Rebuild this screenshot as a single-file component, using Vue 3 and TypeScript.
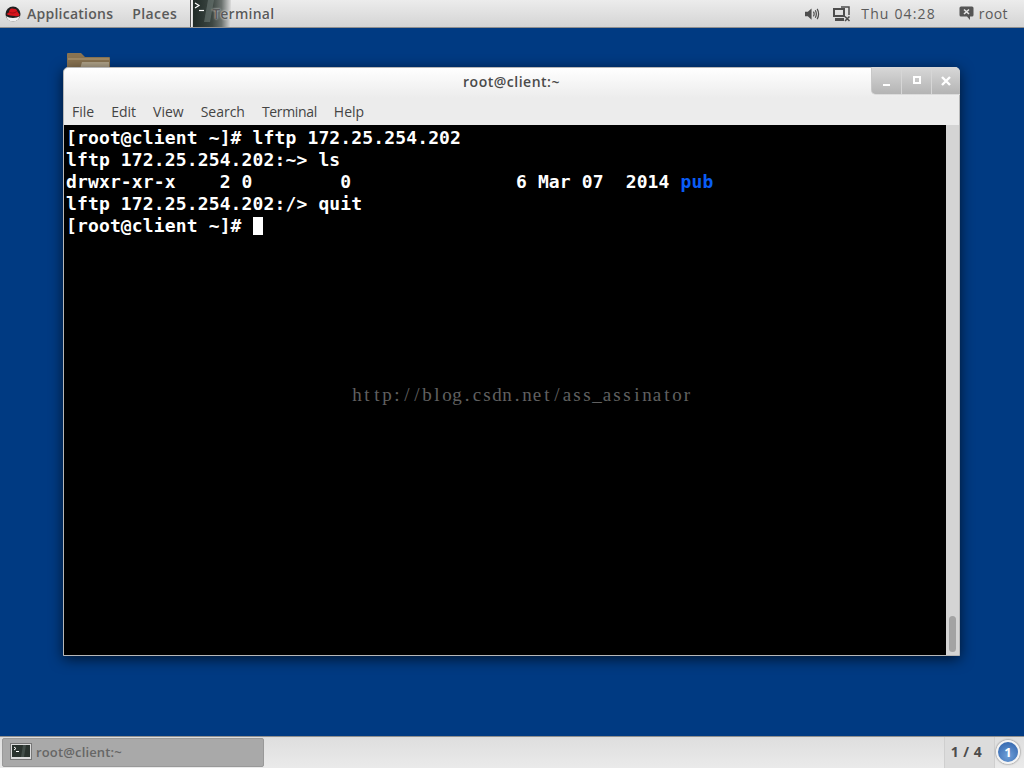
<script setup lang="ts">
const menus: string[] = ['File', 'Edit', 'View', 'Search', 'Terminal', 'Help']
const lines: { text: string; dir?: string }[] = [
  { text: '[root@client ~]# lftp 172.25.254.202' },
  { text: 'lftp 172.25.254.202:~> ls' },
  { text: 'drwxr-xr-x    2 0        0               6 Mar 07  2014 ', dir: 'pub' },
  { text: 'lftp 172.25.254.202:/> quit' },
]
const watermark: string[] = Array.from('http://blog.csdn.net/ass_assinator')
</script>

<template>
  <div class="screen">
    <header class="top">
      <div class="top-left">
        <svg class="hat" viewBox="0 0 16 16" width="16" height="16">
          <circle cx="8" cy="8" r="7.5" fill="#1f1f1f" />
          <path d="M1.2 10 C4 12.5 12 12.5 14.8 10 C14 14 11 15.5 8 15.5 C5 15.5 2 14 1.2 10Z" fill="#f2f2f2" />
          <path d="M1.5 8 C2.5 7 3.5 7.5 4 6 C4.5 3.5 5.5 2 7.5 2.6 C9.5 3.2 11 2.6 11.8 4.2 C12.5 6 14 7.2 14.6 8.8 C14.3 10.3 12 10.6 9.5 10 C6.5 9.5 3.5 9.8 1.5 8Z" fill="#d8141c" />
          <path d="M4.2 6 C6 7.5 9.5 7.5 11.8 5.4" fill="none" stroke="#8f0d12" stroke-width=".8" />
        </svg>
        <span class="apps">Applications</span>
        <span class="places">Places</span>
        <span class="sep"></span>
        <span class="task-tab">
          <span class="tab-icon"><svg viewBox="0 0 38 27" width="38" height="27"><path d="M15 0 L11 22 L17 22 L21 0Z" fill="#7c8a84" opacity=".45" /><path d="M2 3 L6 5.5 L2 8" fill="none" stroke="#fff" stroke-width="1.2" /><path d="M6 10.5 H11" stroke="#fff" stroke-width="1.2" /></svg></span>
          <span class="tab-label">Terminal</span>
        </span>
      </div>
      <div class="top-right">
        <svg class="vol" viewBox="0 0 16 14" width="16" height="14">
          <path d="M0 4.5 H3 L7 1 V13 L3 9.5 H0Z" fill="#4d4d4d" />
          <path d="M9 4.5 Q10.5 7 9 9.5 M11 3 Q13.2 7 11 11 M13 1.5 Q16 7 13 12.5" fill="none" stroke="#4d4d4d" stroke-width="1.3" />
        </svg>
        <svg class="net" viewBox="0 0 18 16" width="18" height="16">
          <rect x="1" y="3" width="10" height="7" fill="none" stroke="#4d4d4d" stroke-width="2" />
          <rect x="2" y="12" width="9" height="3" fill="#4d4d4d" />
          <path d="M8 1 H16 V9" fill="none" stroke="#4d4d4d" stroke-width="1.5" />
          <path d="M12 10.5 L16.5 15 M16.5 10.5 L12 15" stroke="#4d4d4d" stroke-width="1.6" />
        </svg>
        <span class="clock">Thu 04:28</span>
        <svg class="chat" viewBox="0 0 15 15" width="15" height="15">
          <path d="M2 0.5 H13 Q14.5 0.5 14.5 2 V9 Q14.5 10.5 13 10.5 H11 V14 L8 10.5 H2 Q0.5 10.5 0.5 9 V2 Q0.5 0.5 2 0.5Z" fill="#555" />
          <path d="M5 3.5 L10 8 M10 3.5 L5 8" stroke="#e4e4e4" stroke-width="1.6" />
        </svg>
        <span class="user">root</span>
      </div>
    </header>

    <main class="desktop">
      <svg class="folder" viewBox="0 0 44 16" width="44" height="16">
        <path d="M0 16 V1 Q0 0 1 0 H14 L18 4 H42 Q43 4 43 5 V16Z" fill="#8a7452" />
        <rect x="1" y="5" width="41" height="2" fill="#a08a66" />
        <path d="M13 16 L15 9 H42 V16Z" fill="#b3a68c" />
      </svg>

      <section class="window">
        <div class="titlebar">
          <span class="title">root@client:~</span>
          <div class="controls">
            <span class="ctl"><svg viewBox="0 0 12 12" width="12" height="12"><rect x="2" y="9" width="7" height="2" fill="#fff" /></svg></span>
            <span class="ctl"><svg viewBox="0 0 12 12" width="12" height="12"><path fill-rule="evenodd" d="M2 1 H10 V9 H2Z M4 3 V7 H8 V3Z" fill="#fff" /></svg></span>
            <span class="ctl last"><svg viewBox="0 0 12 12" width="12" height="12"><path d="M2 2 L10 10 M10 2 L2 10" stroke="#fff" stroke-width="2.4" /></svg></span>
          </div>
        </div>
        <nav class="menubar">
          <span v-for="m in menus" :key="m">{{ m }}</span>
        </nav>
        <div class="content">
          <div class="terminal">
            <div v-for="(l, i) in lines" :key="i" class="line">{{ l.text }}<span v-if="l.dir" class="dir">{{ l.dir }}</span></div>
            <div class="line">[root@client ~]# <span class="cursor"></span></div>
            <div class="mark"><span v-for="(c, i) in watermark" :key="i" class="ch">{{ c }}</span></div>
          </div>
          <div class="scroll"><span class="thumb"></span></div>
        </div>
      </section>
    </main>

    <footer class="bottom">
      <div class="task">
        <span class="task-icon">
          <svg viewBox="0 0 22 17" width="22" height="17"><rect x="0.5" y="0.5" width="21" height="16" fill="#dcdcdc" stroke="#777" /><rect x="2" y="2" width="18" height="12" fill="#2a332e" /><path d="M11 14 L13 2 H16 L14 14Z" fill="#5c6a64" opacity=".5" /><path d="M4 4 L6 5.5 L4 7" fill="none" stroke="#fff" /><path d="M6 8.5 H9" stroke="#fff" /></svg>
        </span>
        <span>root@client:~</span>
      </div>
      <div class="bottom-right">
        <span class="pager">1 / 4</span>
        <span class="badge">1</span>
      </div>
    </footer>
  </div>
</template>

<style>
html, body { margin: 0; background: #003a82; }
</style>

<style scoped>
.screen {
  width: 1024px;
  height: 768px;
  display: flex;
  flex-direction: column;
  overflow: hidden;
  background: #003a82;
  font-family: "Open Sans", sans-serif;
}
.top {
  height: 27px;
  flex: none;
  display: flex;
  justify-content: space-between;
  background: linear-gradient(#ececec, #d4d4d4);
  border-bottom: 1px solid #8f8f8f;
  color: #5a5a5a;
  font-size: 14px;
  font-weight: 600;
}
.top-left, .top-right { display: flex; align-items: center; }
.hat { margin-left: 5px; }
.apps { margin-left: 6px; letter-spacing: .25px; }
.places { margin-left: 19px; letter-spacing: .4px; }
.sep { width: 2px; height: 27px; margin-left: 13px; background: #555; border-right: 1px solid #eee; box-sizing: border-box; }
.task-tab { display: flex; align-items: center; margin-left: 1px; position: relative; height: 27px; }
.tab-icon { display: block; width: 38px; height: 27px; overflow: hidden; background: linear-gradient(90deg, #1f2a26 0%, #3c4642 50%, #6a716e 75%, #dcdcdc 100%); }
.tab-label { margin-left: -19px; position: relative; letter-spacing: .25px; text-shadow: 0 0 2px #fff; }
.top-right { padding-right: 16px; }
.vol { margin-right: 13px; width: 15px; }
.net { margin-right: 10px; }
.clock { letter-spacing: 1.15px; font-weight: 500; margin-right: 23px; }
.chat { margin-right: 5px; }
.user { letter-spacing: .4px; font-weight: 500; }
.desktop { flex: 1; position: relative; }
.folder { position: absolute; left: 67px; top: 25px; }
.window {
  position: absolute;
  left: 63px;
  top: 39px;
  width: 895px;
  height: 587px;
  display: flex;
  flex-direction: column;
  background: #ececec;
  border-radius: 5px 5px 0 0;
  border: 1px solid #b8b8b8;
  box-shadow: 0 3px 14px rgba(0, 0, 0, .65);
}
.titlebar {
  height: 30px;
  flex: none;
  position: relative;
  display: flex;
  align-items: center;
  justify-content: center;
  background: linear-gradient(#fff, #ececec);
  border-radius: 5px 5px 0 0;
  color: #4a4a4a;
  font-size: 14px;
  font-weight: 600;
}
.title { letter-spacing: .5px; padding-bottom: 4px; }
.controls {
  position: absolute;
  top: -1px;
  right: -1px;
  height: 27px;
  display: flex;
  border-radius: 0 5px 0 5px;
  background: linear-gradient(#d8d8d8, #b4b4b4);
  border-bottom: 1px solid #dcdcdc;
  border-left: 1px solid #c8c8c8;
}
.ctl {
  width: 29px;
  display: flex;
  align-items: center;
  justify-content: center;
  border-right: 1px solid #d6d6d6;
}
.ctl.last { border-right: 0; width: 28px; }
.menubar {
  height: 27px;
  flex: none;
  display: flex;
  align-items: center;
  gap: 17px;
  padding-left: 8px;
  padding-bottom: 1px;
  box-sizing: border-box;
  color: #444;
  font-size: 14px;
}
.menubar span:nth-child(5) { letter-spacing: -.35px; }
.content { flex: 1; display: flex; min-height: 0; }
.terminal {
  flex: 1;
  position: relative;
  background: #000;
  color: #fff;
  padding: 2px 0 0 2px;
  font-family: "DejaVu Sans Mono", monospace;
  font-size: 18px;
  font-weight: 700;
  line-height: 22px;
  letter-spacing: .137px;
  white-space: pre;
}
.line { height: 22px; }
.dir { color: #0a5cf5; }
.cursor { display: inline-block; width: 10px; height: 18px; background: #fff; vertical-align: -3px; }
.mark {
  position: absolute;
  left: 288px;
  top: 259px;
  color: #606060;
  font-family: "Liberation Serif", serif;
  font-size: 19px;
  font-weight: 400;
  letter-spacing: 0;
  line-height: 22px;
}
.ch { display: inline-block; width: 10px; text-align: center; }
.scroll {
  width: 13px;
  flex: none;
  position: relative;
  background: #d4d4d4;
}
.thumb {
  position: absolute;
  left: 3px;
  bottom: 3px;
  width: 7px;
  height: 36px;
  border-radius: 4px;
  background: #a3a3a3;
}
.bottom {
  height: 31px;
  flex: none;
  display: flex;
  justify-content: space-between;
  background: linear-gradient(#dedede, #eaeaea);
  border-top: 1px solid #8f8f8f;
  color: #666;
  font-size: 13px;
  font-weight: 600;
}
.task {
  width: 262px;
  margin: 1px 0 0 2px;
  height: 29px;
  display: flex;
  align-items: center;
  gap: 4px;
  padding: 0 0 2px 7px;
  box-sizing: border-box;
  background: #a9a9a9;
  border: 1px solid #999;
  border-radius: 2px;
  letter-spacing: .15px;
}
.task-icon { display: flex; }
.bottom-right { display: flex; align-items: stretch; }
.pager {
  width: 51px;
  display: flex;
  align-items: center;
  justify-content: center;
  background: #dcdcdc;
  border-left: 1px solid #cfcfcf;
  border-right: 1px solid #cfcfcf;
  color: #4c4c4c;
  font-size: 14px;
  font-weight: 700;
  letter-spacing: .5px;
  padding: 0 6px 2px 0;
  box-sizing: border-box;
}
.badge {
  width: 24px;
  height: 24px;
  margin: 3px 4px 0 1px;
  border-radius: 50%;
  border: 2px solid #f4f4f4;
  box-sizing: border-box;
  background: radial-gradient(circle at 50% 70%, #6f9fd8, #2a5ea8);
  box-shadow: 0 0 2px #555;
  color: #fff;
  font-size: 13px;
  font-weight: 700;
  display: flex;
  align-items: center;
  justify-content: center;
}
</style>
